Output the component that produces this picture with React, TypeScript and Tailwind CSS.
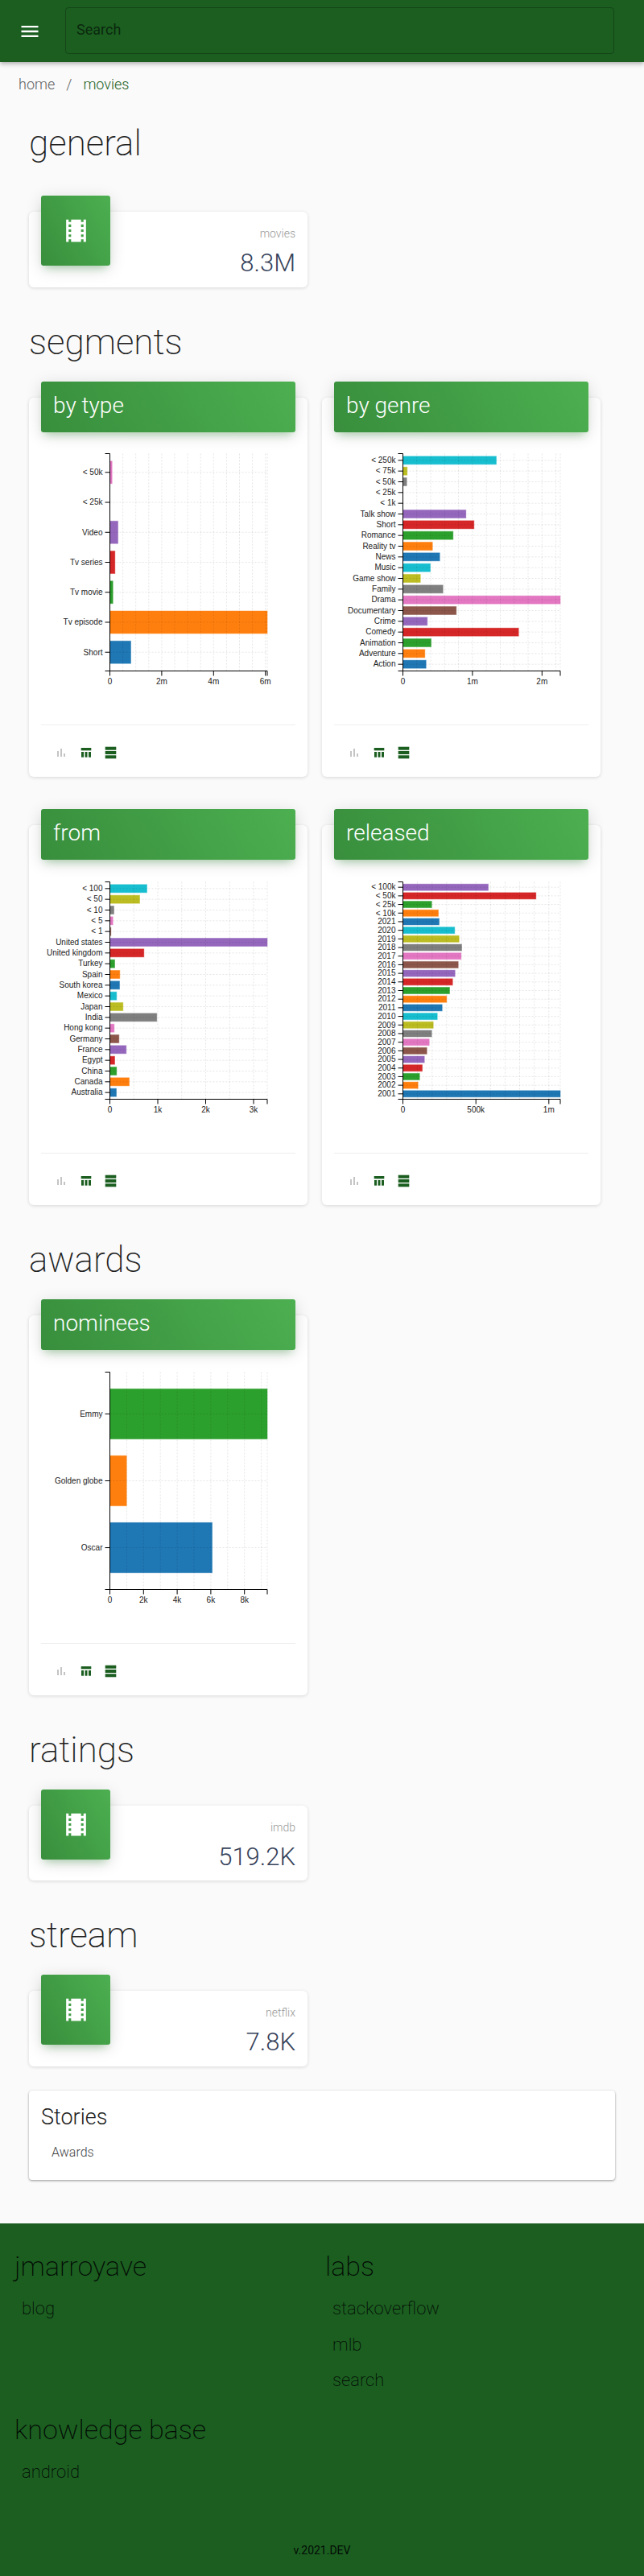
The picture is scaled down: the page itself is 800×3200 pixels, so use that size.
import { MdMenu, MdLocalMovies } from "react-icons/md";

const COLORS = ["#1f77b4", "#ff7f0e", "#2ca02c", "#d62728", "#9467bd", "#8c564b", "#e377c2", "#7f7f7f", "#bcbd22", "#17becf"];

type ChartProps = {
  // top to bottom, [label, bar width in px]
  rows: [string, number][];
  ticks: [string, number][];
  gridStep: number;
};

const X0 = 85.5;
const PLOT_W = 195.5;
const TOP = 10.5;
const BOTTOM = 280.5;

function BarChart({ rows, ticks, gridStep }: ChartProps) {
  const n = rows.length;
  const step = 270 / (n + 0.25);
  const right = X0 + PLOT_W;
  const items = rows.map(([label, w], i) => {
    const fromBottom = n - 1 - i;
    const center = BOTTOM - step * (fromBottom + 0.625);
    return { label, w, center, color: COLORS[fromBottom % 10] };
  });
  const grid: number[] = [];
  for (let x = X0; x < right; x += gridStep) grid.push(x);
  grid.push(right);

  return (
    <svg width="316" height="300" className="block" fontFamily="'Liberation Sans', Arial, sans-serif" fontSize="10">
      {items.map((b) =>
        b.w > 0 ? (
          <rect key={b.label} x={X0} y={b.center - step * 0.375} width={b.w} height={step * 0.75} fill={b.color} stroke={b.color} strokeOpacity="0.45" />
        ) : null
      )}
      {grid.map((x) => (
        <line key={x} x1={x} x2={x} y1={TOP} y2={BOTTOM} stroke="#000" strokeOpacity="0.1" strokeDasharray="2 2" />
      ))}
      {items.map((b) => (
        <line key={b.label} x1={X0} x2={right} y1={b.center} y2={b.center} stroke="#000" strokeOpacity="0.1" strokeDasharray="2 2" />
      ))}
      <path d={`M${X0 - 6} ${TOP}H${X0}V${BOTTOM}`} fill="none" stroke="#000" />
      <path d={`M${X0 - 6} ${BOTTOM}H${right}v6`} fill="none" stroke="#000" />
      {items.map((b) => (
        <g key={b.label}>
          <line x1={X0 - 6} x2={X0} y1={b.center} y2={b.center} stroke="#000" />
          <text x={X0 - 9} y={b.center + 3.3} textAnchor="end" fill="#222">{b.label}</text>
        </g>
      ))}
      {ticks.map(([label, w]) => (
        <g key={label}>
          <line x1={X0 + w} x2={X0 + w} y1={BOTTOM} y2={BOTTOM + 6} stroke="#000" />
          <text x={X0 + w} y={BOTTOM + 16} textAnchor="middle" fill="#222">{label}</text>
        </g>
      ))}
    </svg>
  );
}

function ChartToolbar() {
  return (
    <div className="flex gap-[15px] pl-[17px] pt-[26px]">
      <svg width="16" height="16" fill="#c4c4c4">
        <rect x="3" y="6" width="2" height="7" />
        <rect x="7" y="3" width="2" height="10" />
        <rect x="11" y="9" width="2" height="4" />
      </svg>
      <svg width="16" height="16" fill="#1b5e20">
        <rect x="1.7" y="2" width="12.6" height="3.3" />
        <rect x="2" y="7" width="3" height="6.7" />
        <rect x="6.5" y="7" width="3" height="6.7" />
        <rect x="11" y="7" width="3" height="6.7" />
      </svg>
      <svg width="16" height="16" fill="#1b5e20">
        <rect x="0.7" y="0.7" width="13.6" height="4" />
        <rect x="0.7" y="6" width="13.6" height="4" />
        <rect x="0.7" y="11.3" width="13.6" height="4" />
      </svg>
    </div>
  );
}

function ChartCard({ title, tall, ...chart }: ChartProps & { title: string; tall?: boolean }) {
  return (
    <div className={`bg-white rounded-[6px] shadow-[0_1px_4px_0_rgba(0,0,0,0.14)] ${tall ? "h-[472px]" : "h-[471px]"}`}>
      <div className="-translate-y-5 mx-[15px] h-[63px] px-[15px] pb-[3px] flex items-center rounded-[3px] bg-[linear-gradient(60deg,#388e3c,#4caf50)] shadow-[0_4px_20px_0_rgba(0,0,0,0.14),0_7px_10px_-5px_rgba(76,175,80,0.4)] text-white text-[28px] font-light">
        {title}
      </div>
      <div className={`mx-[15px] -mt-5 ${tall ? "pt-[17px]" : "pt-[16px]"}`}>
        <BarChart {...chart} />
        <div className="h-px bg-[#eeeeee] mt-[47px]" />
        <ChartToolbar />
      </div>
    </div>
  );
}

function StatCard({ label, value, tall }: { label: string; value: string; tall?: boolean }) {
  return (
    <div className={`w-[346px] bg-white rounded-[6px] shadow-[0_1px_4px_0_rgba(0,0,0,0.14)] flex justify-between ${tall ? "h-[94px]" : "h-[93px]"}`}>
      <div className="-mt-5 ml-[15px] w-[86px] h-[87px] rounded-[3px] flex items-center justify-center text-white bg-[linear-gradient(60deg,#388e3c,#4caf50)] shadow-[0_4px_20px_0_rgba(0,0,0,0.14),0_7px_10px_-5px_rgba(76,175,80,0.4)]">
        <MdLocalMovies size={37} />
      </div>
      <div className="pr-[15px] pt-[16px] text-right">
        <div className="text-[14px] leading-[22px] font-light text-[#999999]">{label}</div>
        <div className="mt-[6px] text-[31px] leading-[40px] font-light text-[#36425a]">{value}</div>
      </div>
    </div>
  );
}

function SectionTitle({ children, className }: { children: string; className: string }) {
  return <h2 className={`px-[36px] h-[60px] leading-[60px] text-[44px] font-extralight text-[#212121] ${className}`}>{children}</h2>;
}

function FooterGroup({ title, links }: { title: string; links: string[] }) {
  return (
    <div>
      <h3 className="h-[50px] leading-[50px] text-[34px] font-extralight">{title}</h3>
      <ul className="mt-[6px] pl-[9px] text-[22px] font-extralight">
        {links.map((l) => (
          <li key={l} className="h-[44.5px] leading-[44px]">{l}</li>
        ))}
      </ul>
    </div>
  );
}

export default function App() {
  return (
    <div className="min-h-[3200px] bg-[#fafafa] font-['Roboto',sans-serif]">
      <header className="relative z-10 h-[77px] bg-[#1b5e20] flex items-center shadow-[0_2px_4px_-1px_rgba(0,0,0,0.2),0_4px_5px_0_rgba(0,0,0,0.14)]">
        <div className="w-[81px] pl-[23px] text-white flex items-center">
          <MdMenu size={28} />
        </div>
        <input
          placeholder="Search"
          className="w-[682px] h-[58px] -mt-[1px] pl-[13px] pb-[4px] text-[18px] bg-transparent rounded-[4px] border border-black/25 outline-none placeholder:text-black/60"
        />
      </header>

      <nav className="h-[54px] px-[23px] flex items-center text-[18px] font-light text-[#616161]">
        <span>home</span>
        <span className="mx-[14px]">/</span>
        <span className="text-[#1b5e20]">movies</span>
      </nav>

      <SectionTitle className="mt-[17px]">general</SectionTitle>
      <div className="px-[36px] mt-[55px]">
        <StatCard label="movies" value="8.3M" tall />
      </div>

      <SectionTitle className="mt-[38px]">segments</SectionTitle>
      <div className="px-[36px] mt-[39px] grid grid-cols-[346px_346px] gap-x-[18px] gap-y-[60px]">
        <ChartCard
          title="by type"
          rows={[["< 50k", 2.7], ["< 25k", 0], ["Video", 10], ["Tv series", 6.3], ["Tv movie", 3.7], ["Tv episode", 195.5], ["Short", 26]]}
          ticks={[["0", 0], ["2m", 64.4], ["4m", 128.8], ["6m", 193.2]]}
          gridStep={16.1}
        />
        <ChartCard
          title="by genre"
          rows={[["< 250k", 116], ["< 75k", 5.3], ["< 50k", 4.7], ["< 25k", 0], ["< 1k", 0], ["Talk show", 78.3], ["Short", 88.3], ["Romance", 62.3], ["Reality tv", 36.7], ["News", 45.7], ["Music", 34], ["Game show", 21.7], ["Family", 49.7], ["Drama", 195.5], ["Documentary", 66.3], ["Crime", 30.3], ["Comedy", 143.7], ["Animation", 35], ["Adventure", 27.3], ["Action", 28.7]]}
          ticks={[["0", 0], ["1m", 86.4], ["2m", 172.8]]}
          gridStep={17.28}
        />
        <ChartCard
          tall
          title="from"
          rows={[["< 100", 46], ["< 50", 37], ["< 10", 5], ["< 5", 3.7], ["< 1", 1.3], ["United states", 195.5], ["United kingdom", 42.3], ["Turkey", 6], ["Spain", 12.3], ["South korea", 12], ["Mexico", 8.3], ["Japan", 16.3], ["India", 58.3], ["Hong kong", 5.3], ["Germany", 11.3], ["France", 20.3], ["Egypt", 6], ["China", 8.3], ["Canada", 24], ["Australia", 8]]}
          ticks={[["0", 0], ["1k", 59.5], ["2k", 119], ["3k", 178.5]]}
          gridStep={29.75}
        />
        <ChartCard
          tall
          title="released"
          rows={[["< 100k", 106], ["< 50k", 165.3], ["< 25k", 35.7], ["< 10k", 44], ["2021", 45], ["2020", 64.3], ["2019", 69.7], ["2018", 73], ["2017", 72.3], ["2016", 68.7], ["2015", 64.7], ["2014", 61.7], ["2013", 58], ["2012", 54.3], ["2011", 48.7], ["2010", 42.7], ["2009", 37.7], ["2008", 35.7], ["2007", 32.7], ["2006", 29.7], ["2005", 26.7], ["2004", 24], ["2003", 20.7], ["2002", 18.7], ["2001", 195.5]]}
          ticks={[["0", 0], ["500k", 90.7], ["1m", 181.3]]}
          gridStep={18.13}
        />
      </div>

      <SectionTitle className="mt-[38px]">awards</SectionTitle>
      <div className="pl-[36px] mt-[39px] w-[382px]">
        <ChartCard
          tall
          title="nominees"
          rows={[["Emmy", 195.5], ["Golden globe", 20.7], ["Oscar", 127]]}
          ticks={[["0", 0], ["2k", 41.8], ["4k", 83.6], ["6k", 125.4], ["8k", 167.2]]}
          gridStep={20.9}
        />
      </div>

      <SectionTitle className="mt-[38px]">ratings</SectionTitle>
      <div className="px-[36px] mt-[39px]">
        <StatCard label="imdb" value="519.2K" />
      </div>

      <SectionTitle className="mt-[38px]">stream</SectionTitle>
      <div className="px-[36px] mt-[39px]">
        <StatCard label="netflix" value="7.8K" tall />
      </div>

      <div className="mx-[36px] mt-[30px] h-[111px] px-[15px] pt-[15px] bg-white rounded-[4px] shadow-[0_1px_3px_0_rgba(0,0,0,0.4)]">
        <div className="text-[27px] leading-[36px] font-light text-[#212121]">Stories</div>
        <div className="mt-[14px] pl-[13px] text-[16px] leading-[24px] font-light text-[#424242]">Awards</div>
      </div>

      <footer className="mt-[54px] h-[438px] bg-[#1b5e20] text-black/90 pt-[28px]">
        <div className="grid grid-cols-[386px_1fr] pl-[18px] gap-y-[13px]">
          <FooterGroup title="jmarroyave" links={["blog"]} />
          <FooterGroup title="labs" links={["stackoverflow", "mlb", "search"]} />
          <FooterGroup title="knowledge base" links={["android"]} />
        </div>
        <div className="mt-[63px] text-center text-[14px] leading-[24px]">v.2021.DEV</div>
      </footer>
    </div>
  );
}
